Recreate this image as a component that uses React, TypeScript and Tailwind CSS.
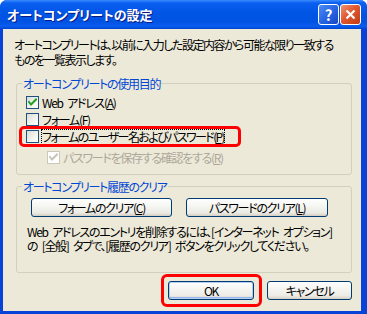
import React from 'react';

const font = 'font-[Noto_Sans_CJK_JP,sans-serif] [font-feature-settings:"palt"]';

const Check = ({ disabled = false }: { disabled?: boolean }) => (
    <svg width="9" height="9" viewBox="0 0 9 9">
        <path d="M1 4 L3 6.5 L8 1.5" fill="none" stroke={disabled ? '#c6c4b8' : '#21a121'} strokeWidth="2" strokeLinecap="square" />
    </svg>
);

const CheckBox = ({ checked = false, disabled = false }: { checked?: boolean; disabled?: boolean }) => (
    <span
        className={
            'flex h-[13px] w-[13px] shrink-0 items-center justify-center border ' +
            (disabled
                ? 'border-[#cac8bb] bg-white'
                : 'border-[#1c5180] bg-[linear-gradient(135deg,#dcdcd7_0%,#f4f4f0_60%,#ffffff_100%)]')
        }
    >
        {checked && <Check disabled={disabled} />}
    </span>
);

const XpButton = ({ children, width, isDefault = false }: { children: React.ReactNode; width: string; isDefault?: boolean }) => (
    <button
        className={
            width +
            ' h-[19px] whitespace-nowrap rounded-[3px] border border-[#003c74] text-[12px] leading-none text-black bg-[linear-gradient(to_bottom,#ffffff_0%,#f4f4f0_45%,#ecebe6_80%,#d6d0c5_100%)] ' +
            (isDefault ? 'shadow-[inset_0_0_0_1px_#b7cdf3,inset_0_-1px_0_1px_#98b8ea]' : 'shadow-[inset_0_-1px_0_#d6d0c5]')
        }
    >
        {children}
    </button>
);

export default function App() {
    return (
        <div className={'h-[314px] w-[367px] overflow-hidden bg-white text-[12px] text-black ' + font}>
            <div className="flex h-full flex-col rounded-t-[7px] bg-[#0842d8]">
                {/* title bar */}
                <div className="flex h-[29px] shrink-0 items-center rounded-t-[7px] bg-[linear-gradient(to_bottom,#3c8cff_0%,#0a5ff0_10%,#0055e5_45%,#0053e2_75%,#0b5cf0_90%,#0046d0_100%)] pl-[7px] pr-[6px]">
                    <span className="text-[13px] font-bold text-white [text-shadow:1px_1px_0_#0a1883]">
                        オートコンプリートの設定
                    </span>
                    <div className="ml-auto flex gap-[1px]">
                        <div className="flex h-[21px] w-[21px] items-center justify-center rounded-[3px] border border-white bg-[linear-gradient(135deg,#4d8cf5_0%,#2a66e3_50%,#1747c4_100%)] text-[15px] font-bold leading-none text-white">
                            ?
                        </div>
                        <div className="flex h-[21px] w-[21px] items-center justify-center rounded-[3px] border border-white bg-[linear-gradient(135deg,#f09473_0%,#e0582f_45%,#c23a12_100%)]">
                            <svg width="11" height="11" viewBox="0 0 11 11">
                                <path d="M1.5 1.5 L9.5 9.5 M9.5 1.5 L1.5 9.5" stroke="white" strokeWidth="2.2" />
                            </svg>
                        </div>
                    </div>
                </div>

                {/* body */}
                <div className="mb-[3px] ml-[3px] mr-[6px] flex flex-1 flex-col whitespace-nowrap bg-[#ece9d8] pl-[13px] pr-[9px] tracking-[-1.3px] [word-spacing:3px]">
                    <p className="mt-[8px] -ml-[2px] leading-[15px] tracking-[-1.5px]">
                        オートコンプリートは、以前に入力した設定内容から可能な限り一致する
                        <br />
                        ものを一覧表示します。
                    </p>

                    <fieldset className="mt-[9px] rounded-[3px] border border-[#d0d0bf]">
                        <legend className="ml-[5px] px-[1px] leading-[15px] text-[#0046d5]">オートコンプリートの使用目的</legend>
                        <div className="pb-[8px] pl-[9px] pt-[3px]">
                            <div className="flex h-[17px] items-center gap-[3px]">
                                <CheckBox checked />
                                <span>
                                    Web アドレス(<span className="underline">A</span>)
                                </span>
                            </div>
                            <div className="flex h-[17px] items-center gap-[3px]">
                                <CheckBox />
                                <span>
                                    フォーム(<span className="underline">F</span>)
                                </span>
                            </div>
                            <div className="relative flex h-[17px] items-center gap-[3px]">
                                <CheckBox />
                                <span className="leading-[14px] tracking-[-1.6px] outline-1 outline-dotted outline-black">
                                    フォームのユーザー名およびパスワード(<span className="underline">P</span>)
                                </span>
                                <div className="pointer-events-none absolute -left-[7px] -top-[2px] h-[21px] w-[222px] rounded-[5px] border-[3px] border-[#ff0000]" />
                            </div>
                            <div className="ml-[21px] mt-[4px] flex h-[17px] items-center gap-[3px] text-[#aca899]">
                                <CheckBox checked disabled />
                                <span>
                                    パスワードを保存する確認をする(<span className="underline">R</span>)
                                </span>
                            </div>
                        </div>
                    </fieldset>

                    <fieldset className="mt-[4px] rounded-[3px] border border-[#d0d0bf]">
                        <legend className="ml-[5px] px-[1px] leading-[15px] text-[#0046d5]">オートコンプリート履歴のクリア</legend>
                        <div className="pb-[19px] pl-[14px] pt-[4px]">
                            <div className="flex gap-[14px]">
                                <XpButton width="w-[141px]">
                                    フォームのクリア(<span className="underline">C</span>)
                                </XpButton>
                                <XpButton width="w-[142px]">
                                    パスワードのクリア(<span className="underline">L</span>)
                                </XpButton>
                            </div>
                            <p className="-ml-[4px] mt-[8px] leading-[14px]">
                                Web アドレスのエントリを削除するには、[インターネット オプション]
                                <br />
                                の [全般] タブで、[履歴のクリア] ボタンをクリックしてください。
                            </p>
                        </div>
                    </fieldset>

                    <div className="mt-[8px] flex justify-end gap-[13px]">
                        <div className="relative">
                            <XpButton width="w-[86px]" isDefault>
                                OK
                            </XpButton>
                            <div className="pointer-events-none absolute -left-[7px] -top-[7px] h-[33px] w-[101px] rounded-[6px] border-[3px] border-[#ff0000]" />
                        </div>
                        <XpButton width="w-[85px]">キャンセル</XpButton>
                    </div>
                </div>
            </div>
        </div>
    );
}
